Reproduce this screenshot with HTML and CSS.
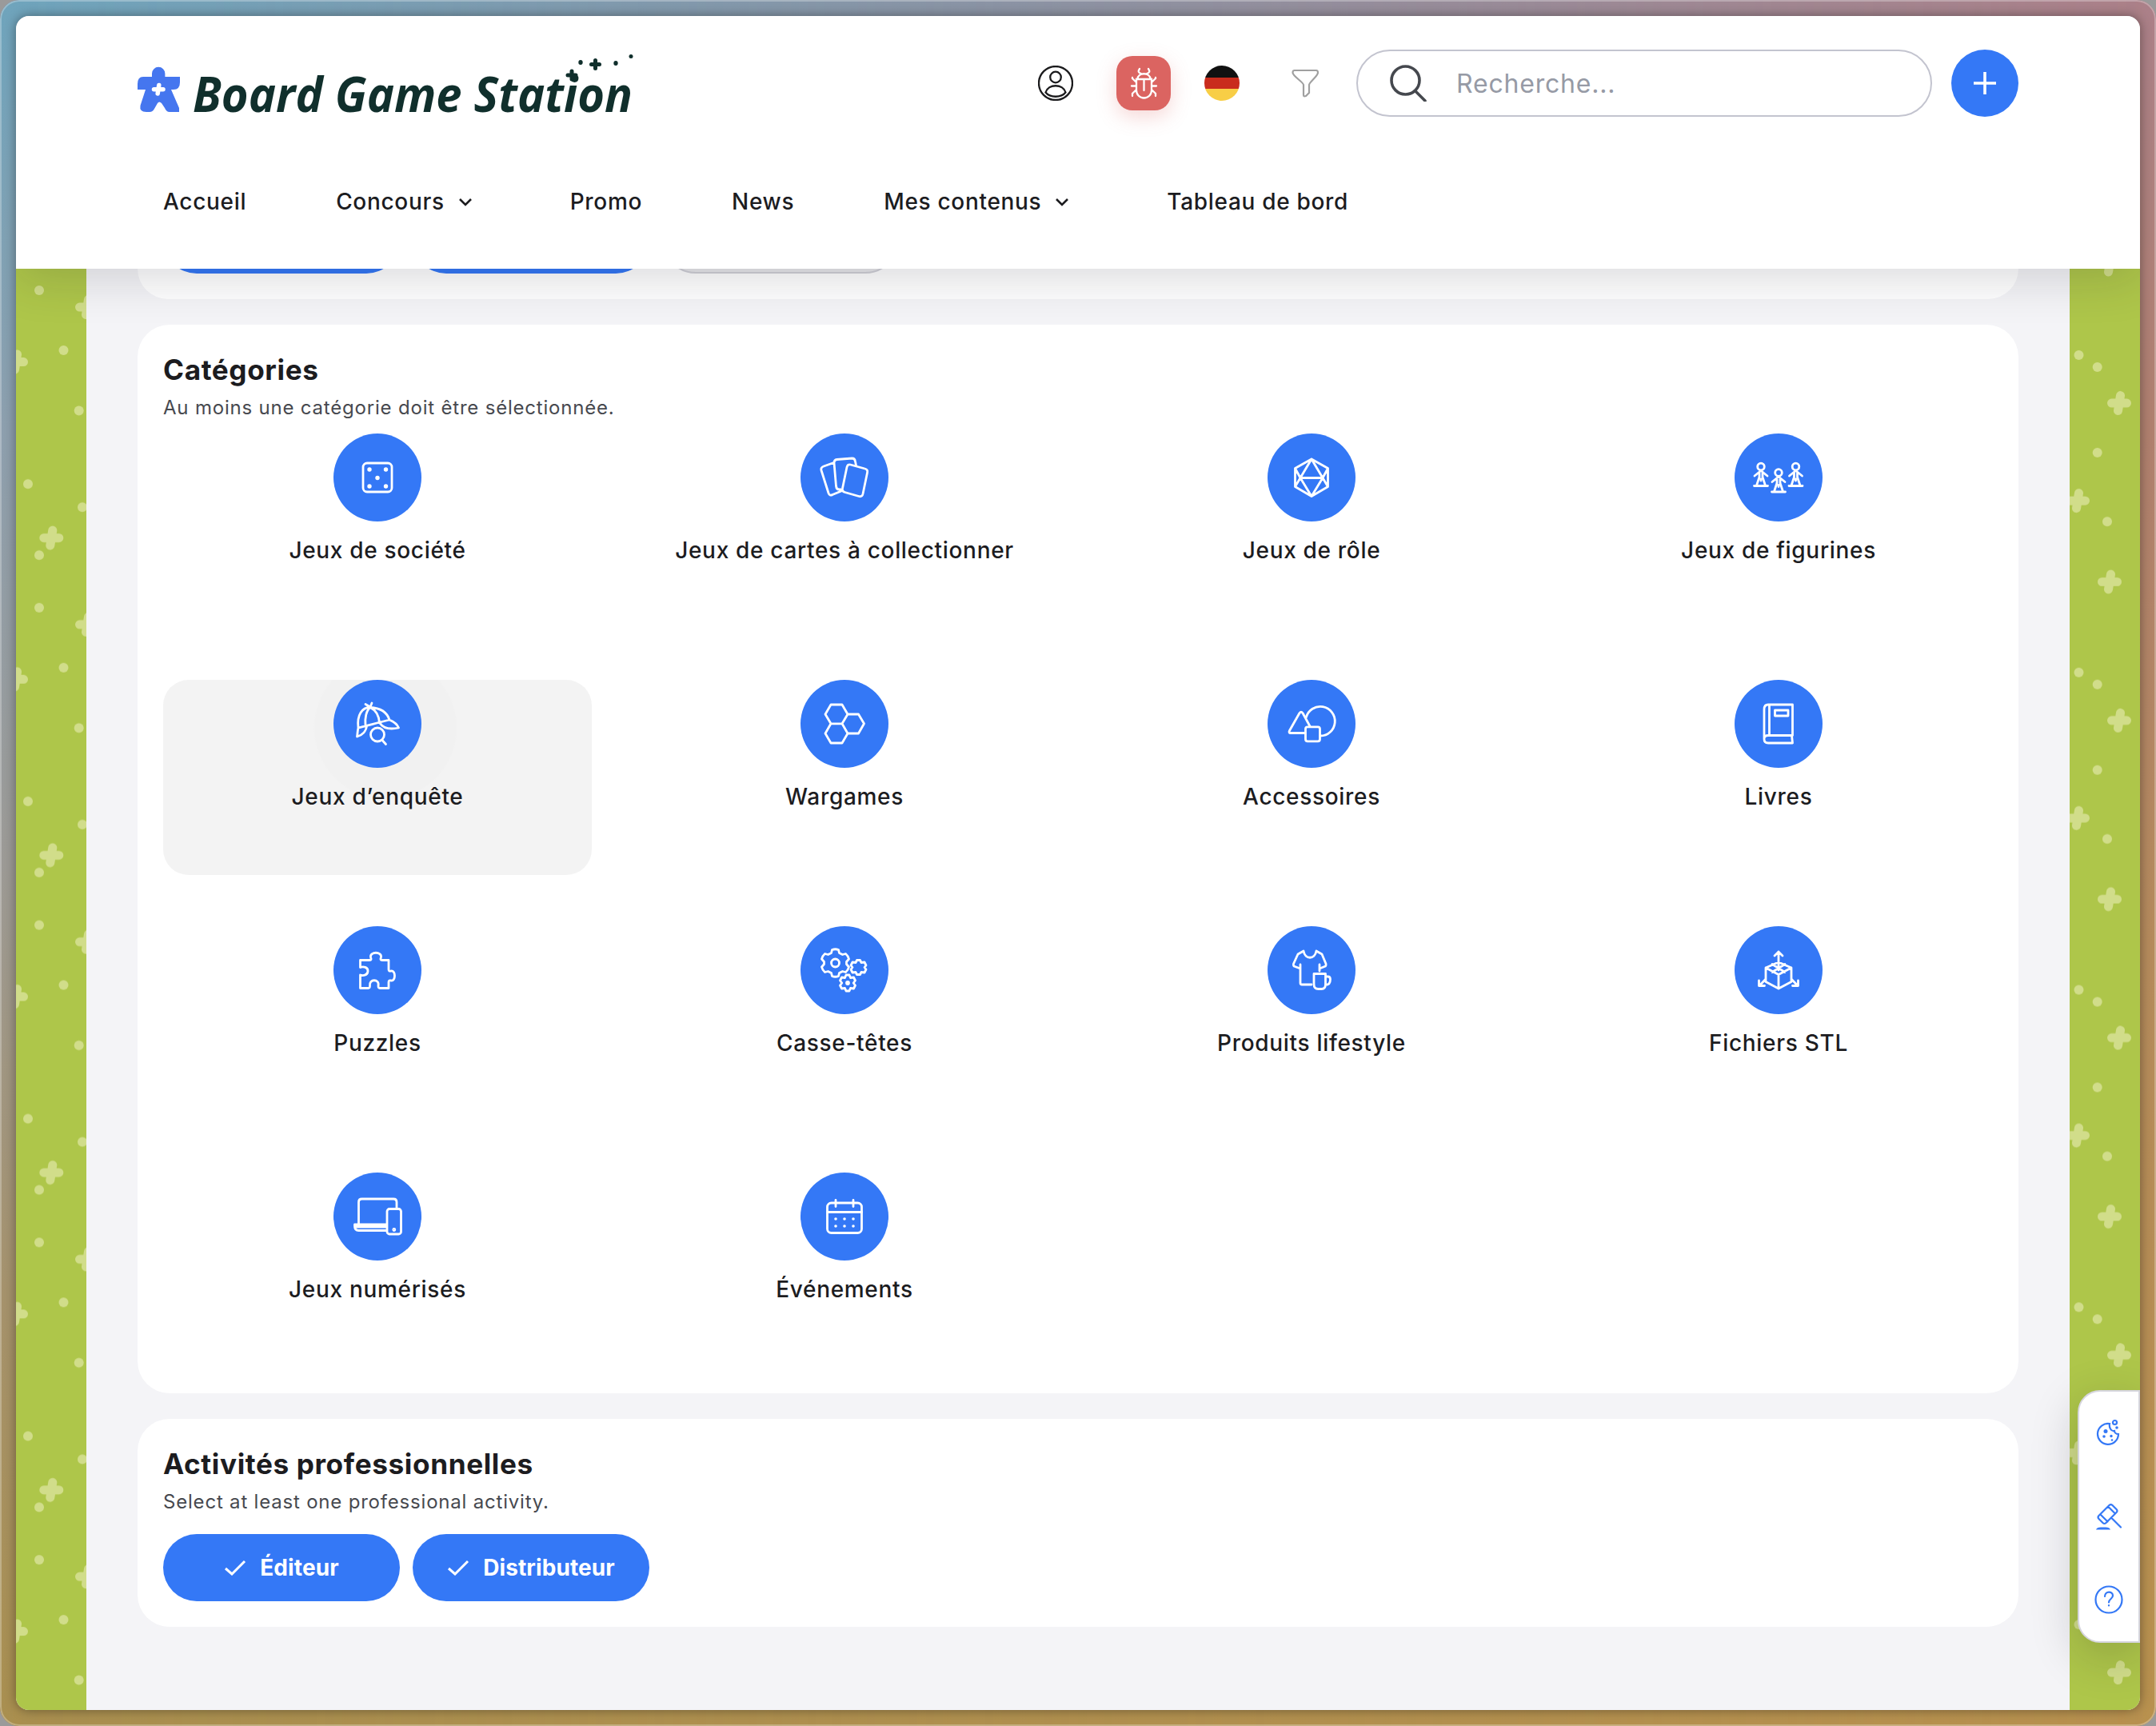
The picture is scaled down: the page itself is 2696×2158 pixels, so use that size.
FILE: index.html
```html
<!DOCTYPE html>
<html lang="fr">
<head>
<meta charset="utf-8">
<title>Board Game Station</title>
<link rel="stylesheet" href="styles.css">
</head>
<body>
<div class="desktop">
<div class="window">
  <header class="header">
    <div class="header-top">
      <svg class="logo" viewBox="0 0 628 84" role="img" aria-label="Board Game Station">
        <path class="logo-mark" d="M18 28v-4a8.200 8.200 0 0 1 16.400 0v4H53v7q0 9-8 9h-3L52 67v5H40q-4 0-6-5l-4-6q-3-3-5 0l-4 7q-2 4-6 4h-4Q2 72 3.500 64L10 44H0v-7q0-9 7-9z"/>
        <path class="logo-cross" d="M26.800 38.500l-1.600 10.500M20.500 43.700h11.500"/>
        <text class="logo-text" x="69" y="72" textLength="550" lengthAdjust="spacingAndGlyphs">Board Game Station</text>
        <path class="logo-spark" d="M543 21v10M538 26h10M572.500 7.500v10M567.500 12.500h10"/>
        <ellipse class="logo-dot" cx="554" cy="10" rx="2.700" ry="3"/><ellipse class="logo-dot" cx="598" cy="11" rx="2.700" ry="3"/><ellipse class="logo-dot" cx="617" cy="2.500" rx="2.500" ry="2.500"/>
      </svg>
      <div class="tools">
        <svg class="tool-icon user" viewBox="0 0 44 44"><circle cx="22" cy="22" r="21"/><circle cx="22" cy="14.500" r="6.800"/><path d="M9.500 33.500C13 22.500 31 22.500 34.500 33.500C29 40.500 15 40.500 9.500 33.500z"/></svg>
        <button class="bug" aria-label="Bug"><svg viewBox="0 0 68 68"><path d="M25 29h19v14a9.500 9.500 0 0 1-19 0zM26.500 29c0-9 16-9 16 0M34.500 29v14M31 22c-4-1-4-3-2-6M38 22c4-1 4-3 2-6M25 33l-5-5v-1M25 37.500h-6M25 42l-5 5v3M44 33l5-5v-1M44 37.500h6M44 42l5 5v3"/></svg></button>
        <svg class="tool-icon flag" viewBox="0 0 44 44"><clipPath id="disc"><circle cx="22" cy="22" r="22"/></clipPath><g clip-path="url(#disc)"><path fill="#111" d="M0 0h44v15H0z"/><path fill="#c92c1d" d="M0 15h44v14H0z"/><path fill="#f8ce46" d="M0 29h44v15H0z"/></g></svg>
        <svg class="tool-icon funnel" viewBox="0 0 44 44"><path d="M8 6h28q2 0 2 3c0 4-11 12-11 15v10l-4 4q-3 1-3-1V24C20 21 6.500 13 6.500 9q0-3 2-3z"/></svg>
      </div>
      <label class="search">
        <svg viewBox="0 0 48 48"><circle cx="21.500" cy="21.500" r="17.500"/><path d="M34 35l12 12"/></svg>
        <span>Recherche...</span>
      </label>
      <button class="add" aria-label="Ajouter"><svg viewBox="0 0 28 28"><path d="M14 0v28M0 14h28"/></svg></button>
    </div>
    <nav class="nav">
      <a>Accueil</a>
      <a>Concours<svg class="chev" viewBox="0 0 18 12"><path d="M2 2l7 7 7-7"/></svg></a>
      <a>Promo</a>
      <a>News</a>
      <a>Mes contenus<svg class="chev" viewBox="0 0 18 12"><path d="M2 2l7 7 7-7"/></svg></a>
      <a>Tableau de bord</a>
    </nav>
  </header>
  <div class="page">
    <svg class="strip">
      <defs><pattern id="leftDots" width="88" height="396.800" patternUnits="userSpaceOnUse">
        <g class="dots"><circle cx="29" cy="27" r="6"/><circle cx="59.500" cy="102" r="6"/><circle cx="78.700" cy="177.500" r="6"/><circle cx="15" cy="269" r="6"/><circle cx="83" cy="298" r="6"/><circle cx="29" cy="358" r="6"/></g>
        <path class="plus" d="M79.500 48h19M90.500 38.500l-3 19M-9.500 116.500h19M1.500 107l-3 19M34.800 336.500h19M45.800 327l-3 19"/>
      </pattern></defs>
      <rect width="88" height="1802" fill="url(#leftDots)"/>
    </svg>
    <main class="content">
      <section class="card card-clipped">
        <div class="chips"><span class="chip"></span><span class="chip"></span><span class="chip chip-off"></span></div>
      </section>
      <section class="card">
        <h2>Catégories</h2>
        <p>Au moins une catégorie doit être sélectionnée.</p>
        <div class="grid">
          <div class="cat"><svg viewBox="0 0 110 110"><rect x="37" y="37" width="36" height="36" rx="5"/><g class="fill"><circle cx="45" cy="45" r="2.700"/><circle cx="65.500" cy="45" r="2.700"/><circle cx="55" cy="55.500" r="2.700"/><circle cx="45" cy="66" r="2.700"/><circle cx="65.500" cy="66" r="2.700"/></g></svg><span>Jeux de société</span></div>
          <div class="cat"><svg viewBox="0 0 110 110"><path d="M41.500 36.500L29 41q-4 1.500-3 5l9 28.500q1.500 4 5 2l11-4.500M42 36.500q0-3.500 3.500-4l19-1.500q3.500 0 4 4l1 5M42 36.500L44.500 66q.5 4 4 4h3M62.500 39l18 5q4 1 3 5L78 75.500q-1 4-5 3L55.500 73.500q-4-1-3-5L58 42q1-4 4.500-3z"/></svg><span>Jeux de cartes à collectionner</span></div>
          <div class="cat"><svg viewBox="0 0 110 110"><path d="M55 32l20.500 11.500v23L55 78.500l-20.500-12v-23zM55 32L41 55.500 55 78.500 69 55.500zM41 55.500h28M34.500 43.500l6.500 12-6.500 11M75.500 43.500l-6.500 12 6.500 11"/></svg><span>Jeux de rôle</span></div>
          <div class="cat"><svg viewBox="0 0 110 110"><g id="pawn"><circle cx="33" cy="41.500" r="4.300"/><path d="M33 46.500L25 53M33 46.500L41 53M31 49.500v5L27.500 65M35 49.500v5L38.500 65M24.500 65.500h17M33 57v2"/></g><use href="#pawn" x="22" y="7.500"/><use href="#pawn" x="43.500"/></svg><span>Jeux de figurines</span></div>

          <div class="cat hovered"><svg viewBox="0 0 110 110"><path d="M31 60C29 44 36 34 46 34.500S66 38 70 50C57 53 40 58 31 60zM70 50c7 3 10 6 11.500 10C72 62 63 62 58 54M31 60c-1 4-1 8-1.500 11C36 69 41 64 41.500 57.500M46 34.500C41 38 39 48 40 57.500M46 34.500C53 38 57 45 57.500 54M46 34l-6-3.500M46 34l2-5"/><circle cx="55" cy="68.500" r="8.500"/><path d="M61 75.500l4.500 5"/></svg><span>Jeux d’enquête</span></div>
          <div class="cat"><svg viewBox="0 0 110 110"><path d="M31 43l7-12h14l7 12-7 11.800H38zM31 67l7-12.200h14L59 67l-7 12H38zM59 43h13.500l7 11.800-7 12.200H59"/></svg><span>Wargames</span></div>
          <div class="cat"><svg viewBox="0 0 110 110"><path d="M47 66.500H29q-3 0-1.500-3L40 41.500q2-2.500 4 0L53 58M48.300 47A18.300 18.300 0 1 1 66 70"/><rect x="47.500" y="58.800" width="18" height="18" rx="2.500"/></svg><span>Accessoires</span></div>
          <div class="cat"><svg viewBox="0 0 110 110"><path d="M72.500 69.500V31H42q-5 0-5 6v37q0 5 5 5h30.500l-1-9.500M37 74q0-4.500 5-4.500h30.500M43.500 31v38.500M50.500 38h16.500v7H50.500z"/></svg><span>Livres</span></div>

          <div class="cat"><svg viewBox="0 0 110 110"><path d="M33.500 42.500H45c3 0 2-2 1.500-4-1-7 14-7 13 0-.5 2-1.500 4 1.500 4h8V54c0 3 2 2 3 2 6-1 6 13 0 12-1 0-3-1-3 2v7.500H58c-2 0-2-1-2-3 2-9-12-9-10.500 0 0 2 0 3-2 3h-10V61c3 1 9 1 9.500-4.500S37 50 33.500 51.500z"/></svg><span>Puzzles</span></div>
          <div class="cat"><svg viewBox="0 0 110 110"><path id="gear" d="M39.500 29.500q4-1.500 8 0l1 4 4 2 4-1q3 2.500 4 6.500l-3 3.500v3l3 3.500q-1 4-4 6.500l-4-1-4 2-1 4q-4 1.500-8 0l-1-4-4-2-4 1q-3-2.500-4-6.500l3-3.500v-3l-3-3.500q1-4 4-6.500l4 1 4-2z"/><circle cx="43.500" cy="46" r="5"/><path d="M70.500 42.500h4l1.500 3 4-.5 2 4-2 2.500 2 2.500-2 4-4-.5-1.500 3h-4l-1.500-3-4 .5-2-4 2-2.500-2-2.500 2-4 4 .5zM57 61h4l1.500 3.500 4-.5 2 4-2.300 3 2.300 3-2 4-4-.5L61 81h-4l-1.500-3.500-4 .5-2-4 2.300-3-2.300-3 2-4 4 .5z"/><circle cx="59" cy="71" r="1.500"/></svg><span>Casse-têtes</span></div>
          <div class="cat"><svg viewBox="0 0 110 110"><path d="M55 73H43q-2 0-2-2V48M41 53l-8-3q-1-1-.5-3l5.500-12 7-4c2 11 14 11 16 0l7 4 5 12q.5 2-.5 3L65 53M65 48v8"/><path d="M58 59.500h14.500v13q0 6-5 6h-4q-5.500 0-5.500-6zM72.500 63h3q3 0 3 3.500 0 7-6 7"/></svg><span>Produits lifestyle</span></div>
          <div class="cat"><svg viewBox="0 0 110 110"><path d="M55 45L71 52v17.500L55 78l-16-8.500V52zM39 52l16 8.500L71 52M55 60.500V78M55 32v23M50 37l5-5 5 5M47 47.500l16 10M63 47.500L47 57.500M39 66l-8 8.500M30.500 68v6.500h7M71 66l8 8.500M79.500 68v6.500h-7"/></svg><span>Fichiers STL</span></div>

          <div class="cat"><svg viewBox="0 0 110 110"><path d="M31.500 65V37q0-4 4-4H75q4 0 4 4v8M66.500 65H26.500v2q0 5.500 5 5.500h35M27 68h39"/><rect x="67" y="45.500" width="17.500" height="31.500" rx="3"/><circle cx="75.800" cy="71.500" r="1"/></svg><span>Jeux numérisés</span></div>
          <div class="cat"><svg viewBox="0 0 110 110"><rect x="33.500" y="38" width="43" height="37.500" rx="5"/><path d="M34 49.500h42.500M44 34.500v8M66 34.500v8"/><g class="fill"><circle cx="44" cy="58" r="1.800"/><circle cx="55" cy="58" r="1.800"/><circle cx="66" cy="58" r="1.800"/><circle cx="44" cy="67" r="1.800"/><circle cx="55" cy="67" r="1.800"/><circle cx="66" cy="67" r="1.800"/></g></svg><span>Événements</span></div>
        </div>
      </section>
      <section class="card">
        <h2>Activités professionnelles</h2>
        <p>Select at least one professional activity.</p>
        <div class="chips chips-below">
          <span class="chip"><svg viewBox="0 0 28 20"><path d="M2 11l8 7L26 2"/></svg><b>Éditeur</b></span>
          <span class="chip"><svg viewBox="0 0 28 20"><path d="M2 11l8 7L26 2"/></svg><b>Distributeur</b></span>
        </div>
      </section>
    </main>
    <svg class="strip">
      <defs><pattern id="rightDots" width="88" height="396.800" patternUnits="userSpaceOnUse">
        <g class="dots"><circle cx="11.500" cy="108" r="6"/><circle cx="34.700" cy="123" r="6"/><circle cx="34.700" cy="230" r="6"/><circle cx="47" cy="316" r="6"/></g>
        <path class="plus" d="M52.500 168h19M63.500 158.500l-3 19M.5 290h19M11.500 280.500l-3 19M40.500 391.500h19M51.500 382l-3 19M40.500-5.500h19M51.500-15l-3 19"/>
      </pattern></defs>
      <rect width="88" height="1802" fill="url(#rightDots)"/>
    </svg>
  </div>
  <aside class="dock">
    <svg viewBox="0 0 36 36"><path d="M19 6A13 13 0 1 0 30 19c-3 0-5-2-5-4-4 1-7-4-6-9z"/><circle cx="25.500" cy="4.500" r="2.500"/><g class="fill"><circle cx="14" cy="15.500" r="2.500"/><circle cx="12" cy="22" r="1.800"/><circle cx="21" cy="21.500" r="1.700"/><circle cx="22" cy="26.500" r="1.300"/><circle cx="28" cy="11" r="1.800"/></g></svg>
    <svg viewBox="0 0 36 36"><path d="M5.500 17L18.500 4q2-2 4 0l5 5q2 2 0 4L14.500 26q-2 2-4 0l-5-5q-2-2 0-4zM17 5.500L26 14.500M7.500 15.500l9 9M21.500 20L33 31.500"/><path class="fill" d="M2 34.500q1-3 6-3h6q5 0 6 3z"/></svg>
    <svg viewBox="0 0 36 36"><circle cx="18" cy="18" r="16.500"/><path d="M13 14c0-7 10-7 10-1 0 4-5 4-5 8.500M18 25v.5"/></svg>
  </aside>
</div>
</div>
</body>
</html>
```
FILE: styles.css
```css
* { box-sizing: border-box; }

body {
  margin: 0;
  background: #9a9a9a;
  font-family: "Inter", "Liberation Sans", sans-serif;
  color: #1c1c1f;
}

button { border: 0; padding: 0; }

.desktop {
  position: relative;
  width: 2696px;
  height: 2158px;
  padding: 20px;
  border-radius: 24px;
  overflow: hidden;
  background: linear-gradient(180deg, #ac8089, #b0806f 25%, #b58b5c 55%, #b8914f);
}

.desktop::before {
  content: "";
  position: absolute;
  inset: 0;
  background: linear-gradient(180deg, #6ea4bc, #8d9fae 25%, #9c9a96 50%, #a5926c 75%, #a98f4f);
  mask-image: linear-gradient(90deg, #000, transparent);
}

.desktop::after {
  content: "";
  position: absolute;
  inset: 0;
  border-radius: 24px;
  box-shadow: inset 0 0 0 2px rgba(255, 255, 255, .28);
}

.window {
  position: relative;
  display: flex;
  flex-direction: column;
  height: 2118px;
  border-radius: 16px;
  background: #f4f4f7;
  box-shadow: 0 0 14px rgba(0, 0, 0, .4);
}

.header {
  position: relative;
  z-index: 2;
  height: 316px;
  flex: none;
  padding: 42px 152px 0;
  background: #fff;
  border-radius: 16px 16px 0 0;
  box-shadow: 0 12px 60px rgba(20, 20, 30, .16);
  clip-path: inset(0 0 -90px 0 round 16px 16px 0 0);
}

.header-top { display: flex; align-items: center; height: 84px; }

.logo { width: 628px; height: 84px; margin-top: 12px; overflow: visible; }
.logo-mark { fill: #4576ef; }
.logo-cross { stroke: #fff; stroke-width: 5.500; stroke-linecap: round; }
.logo-text { font: italic 700 61px "Open Sans", "Noto Sans", sans-serif; fill: #102f2c; }
.logo-spark { stroke: #102f2c; stroke-width: 5; stroke-linecap: round; }
.logo-dot { fill: #102f2c; }

.tools { display: flex; align-items: center; margin-left: auto; margin-right: 42px; }
.tool-icon { width: 44px; height: 44px; fill: none; }
.user { stroke: #1b1b1d; stroke-width: 2.300; }
.bug { width: 68px; height: 68px; margin: 0 42px 0 54px; border-radius: 20px; background: #db6461; box-shadow: 0 8px 24px rgba(219, 100, 97, .25); }
.bug svg { display: block; fill: none; stroke: #fff; stroke-width: 2.300; stroke-linecap: round; }
.funnel { margin-left: 60px; stroke: #a0a0a0; stroke-width: 2.200; }

.search {
  display: flex;
  align-items: center;
  gap: 37px;
  width: 720px;
  height: 84px;
  padding-left: 38px;
  border: 2px solid #c3c4cf;
  border-radius: 42px;
  font-size: 32px;
  letter-spacing: .8px;
  color: #969aa5;
}
.search svg { width: 48px; height: 48px; margin-top: -3px; fill: none; stroke: #45484e; stroke-width: 3.600; stroke-linecap: round; }

.add { display: grid; place-items: center; width: 84px; height: 84px; margin-left: 24px; border-radius: 50%; background: #3478f6; }
.add svg { width: 28px; height: 28px; stroke: #fff; stroke-width: 3.600; }

.nav { display: flex; gap: 112px; padding: 86px 32px 0; font-size: 28px; line-height: 40px; font-weight: 500; letter-spacing: .68px; }
.nav a { display: flex; align-items: center; }
.chev { width: 18px; height: 12px; margin: 2px 10px 0 17px; fill: none; stroke: #1c1c1f; stroke-width: 2.600; }

.page { display: flex; flex: 1; min-height: 0; border-radius: 0 0 16px 16px; overflow: hidden; }
.strip { width: 88px; height: 1802px; flex: none; background: #aec64a; }
.strip .dots { fill: #d1dd8a; }
.strip .plus { stroke: #d1dd8a; stroke-width: 11; stroke-linecap: round; }

.content { display: flex; flex-direction: column; gap: 32px; flex: 1; padding: 0 64px; }
.card { padding: 32px; border-radius: 40px; background: #fff; }
.card-clipped { display: flex; align-items: flex-end; height: 38px; padding-top: 0; border-radius: 0 0 40px 40px; overflow: hidden; }
.card h2 { margin: 0; font-size: 35.2px; line-height: 48px; font-weight: 700; letter-spacing: .6px; }
.card p { margin: 0; font-size: 24px; line-height: 48px; letter-spacing: .8px; color: #47494f; }

.grid { display: grid; grid-template-columns: repeat(4, 536px); grid-auto-rows: 244px; gap: 64px 48px; margin-top: 8px; }
.cat { display: flex; flex-direction: column; align-items: center; gap: 16px; border-radius: 32px; font-size: 28px; line-height: 40px; font-weight: 500; letter-spacing: .68px; }
.cat svg { width: 110px; height: 110px; border-radius: 50%; background: #3478f6; fill: none; stroke: #fff; stroke-width: 2.800; stroke-linecap: round; stroke-linejoin: round; }
.cat .fill { fill: #fff; stroke: none; }
.hovered { background: radial-gradient(circle at 278px 60px, #f1f1f1 88px, #f3f3f3 90px); }

.chips { display: flex; gap: 16px; }
.chips-below { margin-top: 16px; }
.chip { display: flex; align-items: center; justify-content: center; gap: 17px; width: 296px; height: 84px; border-radius: 42px; background: #3478f6; color: #fff; font-size: 28px; letter-spacing: .1px; }
.chip b { font-weight: 700; }
.chip svg { width: 28px; height: 20px; fill: none; stroke: #fff; stroke-width: 3; }
.chip-off { background: #e8e8ea; border: 2px solid #d0d0d6; }

.dock {
  position: absolute;
  right: 0;
  top: 1718px;
  display: flex;
  flex-direction: column;
  align-items: center;
  gap: 68px;
  width: 78px;
  height: 316px;
  padding-top: 34px;
  border: 2px solid #d6d6de;
  border-radius: 28px 0 0 28px;
  background: #fff;
  box-shadow: 0 16px 60px rgba(20, 20, 30, .2);
  clip-path: inset(-120px 0 -84px -120px);
}
.dock svg { width: 36px; height: 36px; overflow: visible; fill: none; stroke: #3478f6; stroke-width: 2.200; stroke-linecap: round; }
.dock .fill { fill: #3478f6; stroke: none; }
```
